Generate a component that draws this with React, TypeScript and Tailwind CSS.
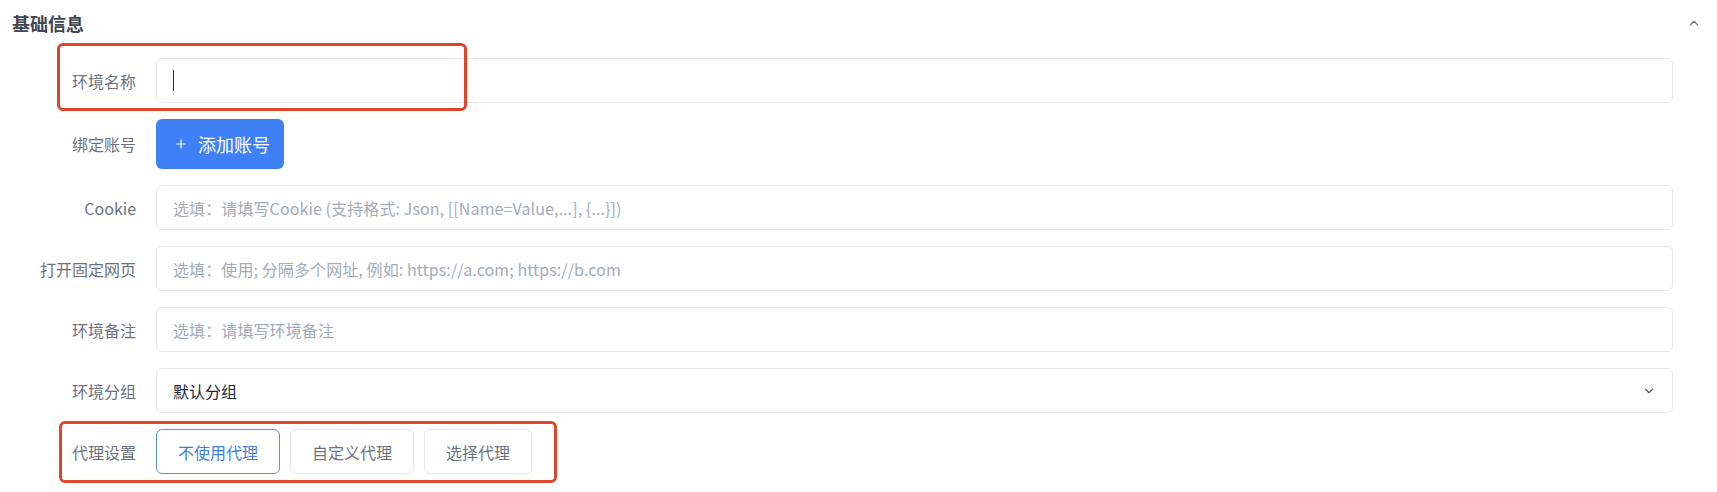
import { Plus, ChevronUp, ChevronDown } from "lucide-react";

const FONT = { fontFamily: '"Noto Sans CJK SC", "Noto Sans", sans-serif' };

function Label({ children }: { children: React.ReactNode }) {
  return <div className="w-[136px] shrink-0 text-right text-base text-[#6b7280]">{children}</div>;
}

function TextField({ placeholder }: { placeholder?: string }) {
  return (
    <div className="flex h-[45px] flex-1 items-center rounded-md border border-[#e5e7eb] bg-white px-4 text-base tracking-[0.1px] text-[#a3abb9]">
      {placeholder}
    </div>
  );
}

export default function App() {
  return (
    <div className="relative h-[492px] w-full bg-white" style={FONT}>
      {/* Section header */}
      <div className="flex h-[50px] items-center justify-between pl-3 pr-4 pb-1">
        <h2 className="text-[18px] font-bold text-[#3f4652]">基础信息</h2>
        <ChevronUp size={14} strokeWidth={2} className="text-[#6b7280]" />
      </div>

      {/* Form */}
      <div className="mt-2 flex flex-col gap-4 pr-[44px]">
        <div className="flex items-center gap-5">
          <Label>环境名称</Label>
          <div className="relative flex h-[45px] flex-1 items-center rounded-md border border-[#e5e7eb] bg-white px-4">
            <span className="h-[21px] w-px bg-[#1f2937]" />
          </div>
        </div>

        <div className="flex items-center gap-5">
          <Label>绑定账号</Label>
          <button className="flex h-[50px] items-center gap-2.5 rounded-md bg-[#4080f6] pl-[18px] pr-[14px] text-[18px] text-white">
            <Plus size={14} strokeWidth={2} />
            添加账号
          </button>
        </div>

        <div className="flex items-center gap-5">
          <Label>Cookie</Label>
          <TextField placeholder="选填：请填写Cookie (支持格式: Json, [[Name=Value,...], {...}])" />
        </div>

        <div className="flex items-center gap-5">
          <Label>打开固定网页</Label>
          <TextField placeholder="选填：使用; 分隔多个网址, 例如: https://a.com; https://b.com" />
        </div>

        <div className="flex items-center gap-5">
          <Label>环境备注</Label>
          <TextField placeholder="选填：请填写环境备注" />
        </div>

        <div className="flex items-center gap-5">
          <Label>环境分组</Label>
          <div className="flex h-[45px] flex-1 items-center justify-between rounded-md border border-[#e5e7eb] bg-white pl-4 pr-[16px] text-base text-[#1f2937]">
            默认分组
            <ChevronDown size={14} strokeWidth={2} className="text-[#4b5563]" />
          </div>
        </div>

        <div className="flex items-center gap-5">
          <Label>代理设置</Label>
          <div className="flex gap-2.5">
            <button className="h-[45px] rounded-md border border-[#5b8fe3] bg-white px-[21px] text-base text-[#3f7fe0]">
              不使用代理
            </button>
            <button className="h-[45px] rounded-md border border-[#e5e7eb] bg-white px-[21px] text-base text-[#6b7280]">
              自定义代理
            </button>
            <button className="h-[45px] rounded-md border border-[#e5e7eb] bg-white px-[21px] text-base text-[#6b7280]">
              选择代理
            </button>
          </div>
        </div>
      </div>

      {/* Red annotation boxes */}
      <div className="pointer-events-none absolute left-[57px] top-[43px] h-[68px] w-[410px] rounded-md border-[3px] border-[#e0452b]" />
      <div className="pointer-events-none absolute left-[59px] top-[421px] h-[62px] w-[498px] rounded-md border-[3px] border-[#e0452b]" />
    </div>
  );
}
